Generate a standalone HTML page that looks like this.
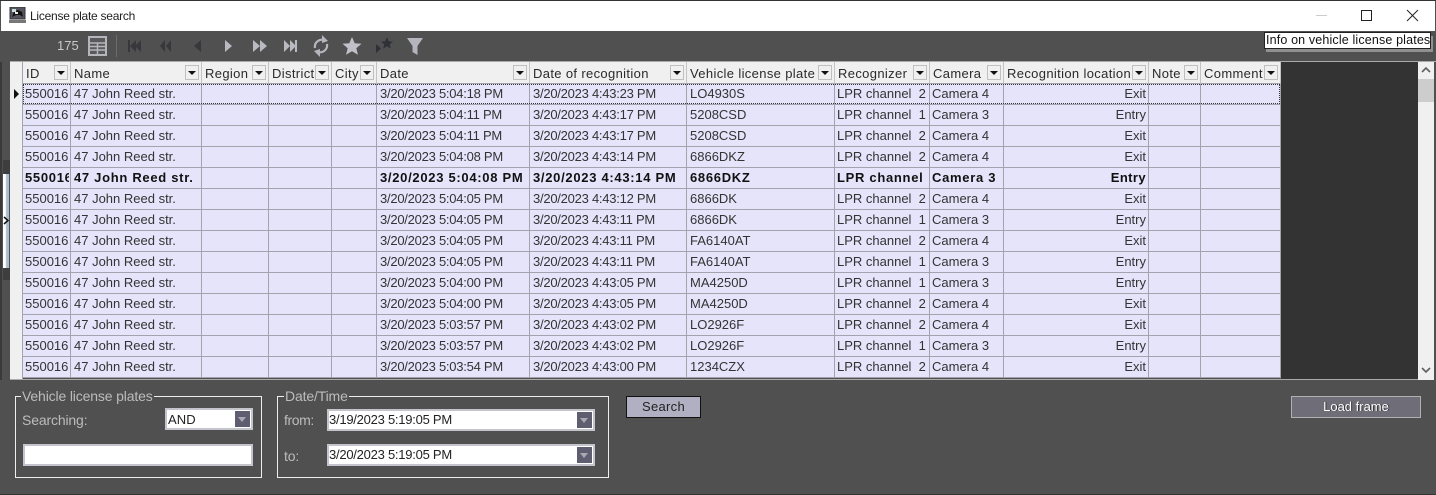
<!DOCTYPE html>
<html><head><meta charset="utf-8"><title>License plate search</title>
<style>
*{box-sizing:border-box}
html,body{margin:0;padding:0}
body{width:1436px;height:495px;position:relative;overflow:hidden;background:#505050;font-family:"Liberation Sans",sans-serif;font-size:13px;color:#222}
.a{position:absolute}
table{position:absolute;left:23px;top:62px;border-collapse:separate;border-spacing:0;table-layout:fixed;width:1258px}
td,th{height:21px;padding:0 2px;border-right:1px solid #a3a3ad;border-bottom:1px solid #a3a3ad;white-space:nowrap;overflow:hidden;font-weight:normal;text-align:left;font-size:13px;line-height:20px;background:#e6e4fb;color:#333}
th{background:#f0f0f0;border-right:1px solid #c4c4c4;border-bottom:1px solid #a3a3ad;position:relative;padding-left:3px;padding-top:2px;height:22px;line-height:19px;letter-spacing:.35px;color:#2a2a2a}
td.r{text-align:right}
td:nth-child(2),td:nth-child(8){padding-left:3px}
td:nth-child(6),td:nth-child(7){padding-left:3px;letter-spacing:-.25px}
tr.b td:nth-child(n){font-weight:bold;color:#111;letter-spacing:.7px}
tr.b td.r:nth-child(n){letter-spacing:.4px}
tr.b span{display:inline-block;width:44px;overflow:hidden;vertical-align:top}
th i{position:absolute;right:2px;top:3px;width:14px;height:15px;background:#f0f0f0;border:1px solid #c0c0c0}
th i:after{content:"";position:absolute;left:2px;top:5px;border:4px solid transparent;border-top:4px solid #111;border-bottom:0}
.lbl{color:#bcbcbc;font-size:14px;line-height:16px;letter-spacing:-.15px}
.box{border:1px solid #eee}
.input{background:#fff;border:2px solid #c4c4cc;color:#222;font-size:13px;line-height:18px;padding-left:0;letter-spacing:-.25px;white-space:nowrap}
.dd{position:absolute;right:1px;top:1px;width:15px;height:16px;background:#5f5d70}
.dd:after{content:"";position:absolute;left:3px;top:6px;border:4px solid transparent;border-top:5px solid #a9a9b4;border-bottom:0}
</style></head><body>
<div class="a" style="left:0;top:0;width:1436px;height:1px;background:#333"></div>
<div class="a" style="left:1px;top:1px;width:1434px;height:30px;background:#fff"></div>
<svg class="a" style="left:9px;top:7px" width="17" height="17" viewBox="0 0 17 17"><rect x="1" y="0" width="15" height="12" fill="#55555f" stroke="#333"/><path d="M3 10 L5 5 L9 3 L13 5 L14 10 L11 8 L7 8 Z" fill="#111"/><rect x="3" y="2" width="4" height="3" fill="#cdd"/><rect x="6" y="5" width="3" height="2" fill="#eee"/><rect x="0" y="13" width="17" height="3" fill="#777"/></svg>
<div class="a" style="left:30px;top:8px;font-size:12px;line-height:16px;color:#222;letter-spacing:-.25px">License plate search</div>
<div class="a" style="left:1316px;top:15px;width:11px;height:1px;background:#ccc"></div>
<div class="a" style="left:1361px;top:10px;width:11px;height:11px;border:1px solid #222"></div>
<svg class="a" style="left:1406px;top:9px" width="13" height="13" viewBox="0 0 13 13"><path d="M1 1 L12 12 M12 1 L1 12" stroke="#222" stroke-width="1"/></svg>

<!-- toolbar -->
<div class="a" style="left:57px;top:38px;color:#c8c8c8;font-size:13px;line-height:16px">175</div>
<svg class="a" style="left:88px;top:36px" width="19" height="20" viewBox="0 0 19 20"><rect width="19" height="20" fill="#b5b5bd"/><rect x="2" y="2" width="15" height="16" fill="#5a5a5a"/><path d="M2 7H17M2 10.500H17M2 14H17M9.500 7V18" stroke="#b5b5bd" stroke-width="1.500"/></svg>
<div class="a" style="left:116px;top:35px;width:1px;height:22px;background:#6c6c6c"></div>
<svg class="a" style="left:120px;top:32px" width="310" height="28" viewBox="0 0 310 28">
<g fill="#37373c"><rect x="8" y="8" width="2" height="12"/><path d="M16 8V20L10 14ZM21 8V20L15 14Z"/><path d="M45 8V20L40 14ZM51 8V20L46 14Z"/><path d="M81 8V20L74 14Z"/></g>
<g fill="#b9b9c2"><path d="M105 8V20L112 14Z"/><path d="M133 8V20L140 14ZM140 8V20L147 14Z"/><path d="M164 8V20L170 14ZM170 8V20L176 14Z"/><rect x="175" y="8" width="2" height="12"/></g>
<g fill="none" stroke="#b5b5bd" stroke-width="2.200"><path d="M195 16A7 7 0 0 1 205 8.500"/><path d="M207 12A7 7 0 0 1 197 19.500"/></g>
<path d="M202 3L208 9L202 11ZM200 25L194 19L200 17Z" fill="#b5b5bd"/>
<path d="M232 5L234.700 11.300L241.500 11.800L236.300 16.200L238 22.800L232 19.300L226 22.800L227.700 16.200L222.500 11.800L229.300 11.300Z" fill="#c0c0c8"/>
<path d="M267 5L268.700 9.300L273 9.600L269.700 12.400L270.800 16.600L267 14.300L263.200 16.600L264.300 12.400L261 9.600L265.300 9.300Z" fill="#2f2f38"/>
<path d="M256 12V21L261 16.500Z" fill="#2f2f38"/>
<path d="M287 6H303L297.500 14V23L292.500 20V14Z" fill="#b5b5bd"/>
</svg>

<!-- tooltip -->
<div class="a" style="left:1266px;top:36px;width:167px;height:16px;background:#909090"></div>
<div class="a" style="left:1264px;top:32px;width:167px;height:17px;background:#fff;border:1px solid #222;font-size:12.500px;letter-spacing:.15px;line-height:15px;padding-left:1px;color:#111;white-space:nowrap;overflow:hidden">Info on vehicle license plates</div>

<!-- left strip -->
<div class="a" style="left:0;top:62px;width:2px;height:318px;background:#3a3a3a"></div>
<div class="a" style="left:3px;top:160px;width:7px;height:14px;background:#3e3e3e"></div>
<div class="a" style="left:3px;top:268px;width:7px;height:12px;background:#3e3e3e"></div>
<div class="a" style="left:3px;top:174px;width:6px;height:94px;background:linear-gradient(90deg,#fff 0,#fff 40%,#a8bccb 60%,#a8bccb 100%)"></div>
<svg class="a" style="left:3px;top:216px" width="6" height="9" viewBox="0 0 6 9"><path d="M1 1L5 4.500L1 8" fill="none" stroke="#111" stroke-width="1.500"/></svg>

<!-- grid -->
<div class="a" style="left:10px;top:61px;width:1426px;height:1px;background:#aaa"></div>
<div class="a" style="left:10px;top:62px;width:13px;height:318px;background:#f0f0f0;border-right:1px solid #a3a3ad"></div>
<div class="a" style="left:1281px;top:62px;width:137px;height:317px;background:#333"></div>
<div class="a" style="left:10px;top:379px;width:1408px;height:1px;background:#aaa"></div>
<div class="a" style="left:1418px;top:62px;width:16px;height:318px;background:#f0f0f0"></div>
<div class="a" style="left:1418px;top:79px;width:16px;height:23px;background:#cdcdcd"></div>
<svg class="a" style="left:1418px;top:62px" width="16" height="318" viewBox="0 0 16 318"><path d="M4 10L8 6L12 10M4 306L8 310L12 306" fill="none" stroke="#606060" stroke-width="1.600"/></svg>
<svg class="a" style="left:13px;top:89px" width="7" height="10" viewBox="0 0 7 10"><path d="M1 0V10L6 5Z" fill="#111"/></svg>

<table>
<colgroup><col style="width:48px"><col style="width:131px"><col style="width:67px"><col style="width:63px"><col style="width:45px"><col style="width:153px"><col style="width:157px"><col style="width:148px"><col style="width:95px"><col style="width:74px"><col style="width:145px"><col style="width:52px"><col style="width:80px"></colgroup>
<tr><th>ID<i></i></th><th>Name<i></i></th><th>Region<i></i></th><th>District<i></i></th><th>City<i></i></th><th>Date<i></i></th><th>Date of recognition<i></i></th><th>Vehicle license plate<i></i></th><th>Recognizer<i></i></th><th>Camera<i></i></th><th>Recognition location<i></i></th><th>Note<i></i></th><th>Comment<i></i></th></tr>
<tr><td>550016</td><td>47 John Reed str.</td><td></td><td></td><td></td><td>3/20/2023 5:04:18 PM</td><td>3/20/2023 4:43:23 PM</td><td>LO4930S</td><td>LPR channel&nbsp; 2</td><td>Camera 4</td><td class="r">Exit</td><td></td><td></td></tr>
<tr><td>550016</td><td>47 John Reed str.</td><td></td><td></td><td></td><td>3/20/2023 5:04:11 PM</td><td>3/20/2023 4:43:17 PM</td><td>5208CSD</td><td>LPR channel&nbsp; 1</td><td>Camera 3</td><td class="r">Entry</td><td></td><td></td></tr>
<tr><td>550016</td><td>47 John Reed str.</td><td></td><td></td><td></td><td>3/20/2023 5:04:11 PM</td><td>3/20/2023 4:43:17 PM</td><td>5208CSD</td><td>LPR channel&nbsp; 2</td><td>Camera 4</td><td class="r">Exit</td><td></td><td></td></tr>
<tr><td>550016</td><td>47 John Reed str.</td><td></td><td></td><td></td><td>3/20/2023 5:04:08 PM</td><td>3/20/2023 4:43:14 PM</td><td>6866DKZ</td><td>LPR channel&nbsp; 2</td><td>Camera 4</td><td class="r">Exit</td><td></td><td></td></tr>
<tr class="b"><td><span>550016</span></td><td>47 John Reed str.</td><td></td><td></td><td></td><td>3/20/2023 5:04:08 PM</td><td>3/20/2023 4:43:14 PM</td><td>6866DKZ</td><td>LPR channel</td><td>Camera 3</td><td class="r">Entry</td><td></td><td></td></tr>
<tr><td>550016</td><td>47 John Reed str.</td><td></td><td></td><td></td><td>3/20/2023 5:04:05 PM</td><td>3/20/2023 4:43:12 PM</td><td>6866DK</td><td>LPR channel&nbsp; 2</td><td>Camera 4</td><td class="r">Exit</td><td></td><td></td></tr>
<tr><td>550016</td><td>47 John Reed str.</td><td></td><td></td><td></td><td>3/20/2023 5:04:05 PM</td><td>3/20/2023 4:43:11 PM</td><td>6866DK</td><td>LPR channel&nbsp; 1</td><td>Camera 3</td><td class="r">Entry</td><td></td><td></td></tr>
<tr><td>550016</td><td>47 John Reed str.</td><td></td><td></td><td></td><td>3/20/2023 5:04:05 PM</td><td>3/20/2023 4:43:11 PM</td><td>FA6140AT</td><td>LPR channel&nbsp; 2</td><td>Camera 4</td><td class="r">Exit</td><td></td><td></td></tr>
<tr><td>550016</td><td>47 John Reed str.</td><td></td><td></td><td></td><td>3/20/2023 5:04:05 PM</td><td>3/20/2023 4:43:11 PM</td><td>FA6140AT</td><td>LPR channel&nbsp; 1</td><td>Camera 3</td><td class="r">Entry</td><td></td><td></td></tr>
<tr><td>550016</td><td>47 John Reed str.</td><td></td><td></td><td></td><td>3/20/2023 5:04:00 PM</td><td>3/20/2023 4:43:05 PM</td><td>MA4250D</td><td>LPR channel&nbsp; 1</td><td>Camera 3</td><td class="r">Entry</td><td></td><td></td></tr>
<tr><td>550016</td><td>47 John Reed str.</td><td></td><td></td><td></td><td>3/20/2023 5:04:00 PM</td><td>3/20/2023 4:43:05 PM</td><td>MA4250D</td><td>LPR channel&nbsp; 2</td><td>Camera 4</td><td class="r">Exit</td><td></td><td></td></tr>
<tr><td>550016</td><td>47 John Reed str.</td><td></td><td></td><td></td><td>3/20/2023 5:03:57 PM</td><td>3/20/2023 4:43:02 PM</td><td>LO2926F</td><td>LPR channel&nbsp; 2</td><td>Camera 4</td><td class="r">Exit</td><td></td><td></td></tr>
<tr><td>550016</td><td>47 John Reed str.</td><td></td><td></td><td></td><td>3/20/2023 5:03:57 PM</td><td>3/20/2023 4:43:02 PM</td><td>LO2926F</td><td>LPR channel&nbsp; 1</td><td>Camera 3</td><td class="r">Entry</td><td></td><td></td></tr>
<tr><td>550016</td><td>47 John Reed str.</td><td></td><td></td><td></td><td>3/20/2023 5:03:54 PM</td><td>3/20/2023 4:43:00 PM</td><td>1234CZX</td><td>LPR channel&nbsp; 2</td><td>Camera 4</td><td class="r">Exit</td><td></td><td></td></tr>
</table>
<div class="a" style="left:23px;top:84px;width:1257px;height:20px;border:1px dotted #333"></div>

<!-- bottom panel -->
<div class="a box" style="left:15px;top:396px;width:247px;height:82px"></div>
<div class="a lbl" style="left:21px;top:388px;background:#505050;padding:0 1px">Vehicle license plates</div>
<div class="a lbl" style="left:22px;top:412px">Searching:</div>
<div class="a input" style="left:165px;top:408px;width:88px;height:22px;letter-spacing:.1px;padding-left:1px;line-height:19px">AND<div class="dd"></div></div>
<div class="a input" style="left:23px;top:444px;width:230px;height:22px"></div>

<div class="a box" style="left:277px;top:396px;width:332px;height:82px"></div>
<div class="a lbl" style="left:284px;top:388px;background:#505050;padding:0 1px">Date/Time</div>
<div class="a lbl" style="left:284px;top:412px;letter-spacing:-.4px">from:</div>
<div class="a lbl" style="left:284px;top:448px">to:</div>
<div class="a input" style="left:327px;top:409px;width:268px;height:22px">3/19/2023 5:19:05 PM<div class="dd"></div></div>
<div class="a input" style="left:327px;top:444px;width:268px;height:22px">3/20/2023 5:19:05 PM<div class="dd"></div></div>

<div class="a" style="left:626px;top:396px;width:75px;height:22px;background:#b1b0c2;border:1px solid #111;text-align:center;line-height:19px;font-size:13px;letter-spacing:.3px;color:#222">Search</div>
<div class="a" style="left:1291px;top:396px;width:130px;height:22px;background:#6e6d78;border:1px solid #b0b0b0;text-align:center;line-height:20px;font-size:13px;color:#fff;text-shadow:1px 0 0 #333">Load frame</div>
<div class="a" style="left:0;top:494px;width:1436px;height:1px;background:#333"></div>
</body></html>
